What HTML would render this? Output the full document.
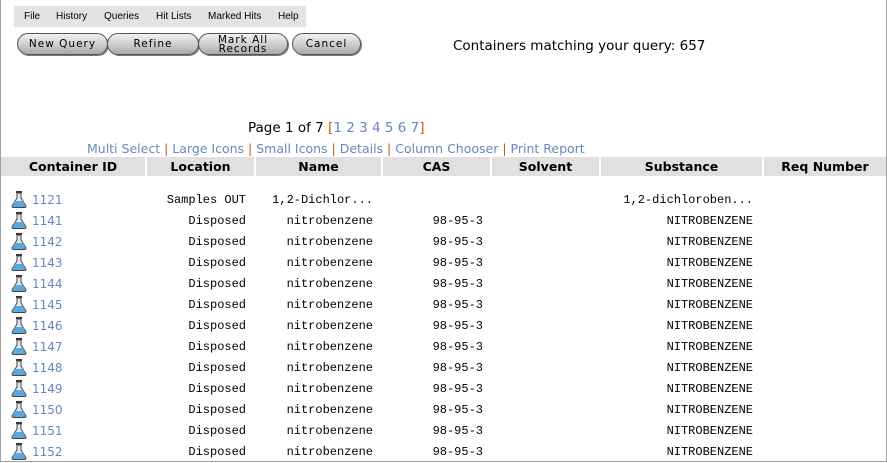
<!DOCTYPE html>
<html><head><style>
body{margin:0;width:885px;height:461px;border:1px solid #a0a0a0;border-top:none;overflow:hidden;position:relative;font-family:"DejaVu Sans",Verdana,sans-serif;background:#fff}
.menu{position:absolute;left:13px;top:6px;width:292px;height:21px;background:#e3e3e3;font-size:10px;font-family:"Liberation Sans",sans-serif}
.menu span{position:absolute;top:5px}
.btn{position:absolute;top:33px;height:22px;border:1px solid #555;border-radius:12px;background:linear-gradient(#f2f2f2,#c8c8c8 60%,#a8a8a8);box-sizing:border-box;font-size:10.5px;text-align:center;line-height:20px;letter-spacing:1px;font-family:"DejaVu Sans",sans-serif;box-shadow:1px 1px 0 #777}
.a{position:absolute;font-size:12.5px;color:#6688bb;white-space:nowrap}
.sep{color:#c06010}
.hdr{position:absolute;top:157px;height:19px;background:#e0e0e0;font-weight:bold;font-size:12.5px;text-align:center;line-height:19px;border-right:2px solid #fff;box-sizing:border-box}
.row{position:absolute;left:0;width:885px;height:21px;font-family:"Liberation Mono",monospace;font-size:12px}
.row div{position:absolute;top:3px;white-space:nowrap}
.id{font-family:"DejaVu Sans",sans-serif;font-size:12px;color:#6688bb;left:31px}
.r{text-align:right}
</style></head><body>
<div class="menu"><span style="left:10px">File</span><span style="left:42px">History</span><span style="left:90px">Queries</span><span style="left:142px">Hit Lists</span><span style="left:194px">Marked Hits</span><span style="left:264px">Help</span></div>
<div class="btn" style="left:16px;width:91px">New Query</div>
<div class="btn" style="left:106px;width:92px">Refine</div>
<div class="btn" style="left:197px;width:90px;line-height:9px;padding-top:2px">Mark All<br>Records</div>
<div class="btn" style="left:291px;width:69px">Cancel</div>
<div style="position:absolute;left:452px;top:38px;font-size:13.5px">Containers matching your query: 657</div>
<div style="position:absolute;left:247px;top:120px;font-size:13.5px;white-space:nowrap">Page 1 of 7 <span class="sep">[</span><span style="color:#6688bb">1 2 3 4 5 6 7</span><span class="sep">]</span></div>
<div class="a" style="left:86px;top:141px">Multi Select <span class="sep">|</span> Large Icons <span class="sep">|</span> Small Icons <span class="sep">|</span> Details <span class="sep">|</span> Column Chooser <span class="sep">|</span> Print Report</div>
<div class="hdr" style="left:0;width:146px">Container ID</div>
<div class="hdr" style="left:146px;width:109px">Location</div>
<div class="hdr" style="left:255px;width:127px">Name</div>
<div class="hdr" style="left:382px;width:109px">CAS</div>
<div class="hdr" style="left:491px;width:109px">Solvent</div>
<div class="hdr" style="left:600px;width:163px">Substance</div>
<div class="hdr" style="left:763px;width:122px;border-right:none">Req Number</div>
<div id="rows"></div>
<script>
var ids=[1121,1141,1142,1143,1144,1145,1146,1147,1148,1149,1150,1151,1152];
var h='';
var flask='<svg style="position:absolute;left:10px;top:1px" width="16" height="17" viewBox="0 0 16 17"><rect x="5" y="0" width="6" height="2" fill="#333"/><path d="M6 2h4v5l5 8q0 1.5-1.5 1.5h-11Q1 16.5 1 15l5-8z" fill="#dfe6ee" stroke="#444"/><path d="M4 10h8l2.5 5q0 1-1 1h-11q-1 0-1-1z" fill="#5aa8dc"/></svg>';
ids.forEach(function(id,i){
 var y=190+21*i;
 var f=i==0;
 h+='<div class="row" style="top:'+y+'px">'+flask+'<div class="id">'+id+'</div>'+
 '<div class="r" style="right:'+(885-245)+'px">'+(f?'Samples OUT':'Disposed')+'</div>'+
 '<div class="r" style="right:'+(885-372)+'px">'+(f?'1,2-Dichlor...':'nitrobenzene')+'</div>'+
 (f?'':'<div class="r" style="right:'+(885-482)+'px">98-95-3</div>')+
 '<div class="r" style="right:'+(885-752)+'px">'+(f?'1,2-dichloroben...':'NITROBENZENE')+'</div></div>';
});
document.getElementById('rows').innerHTML=h;
</script>
</body></html>
